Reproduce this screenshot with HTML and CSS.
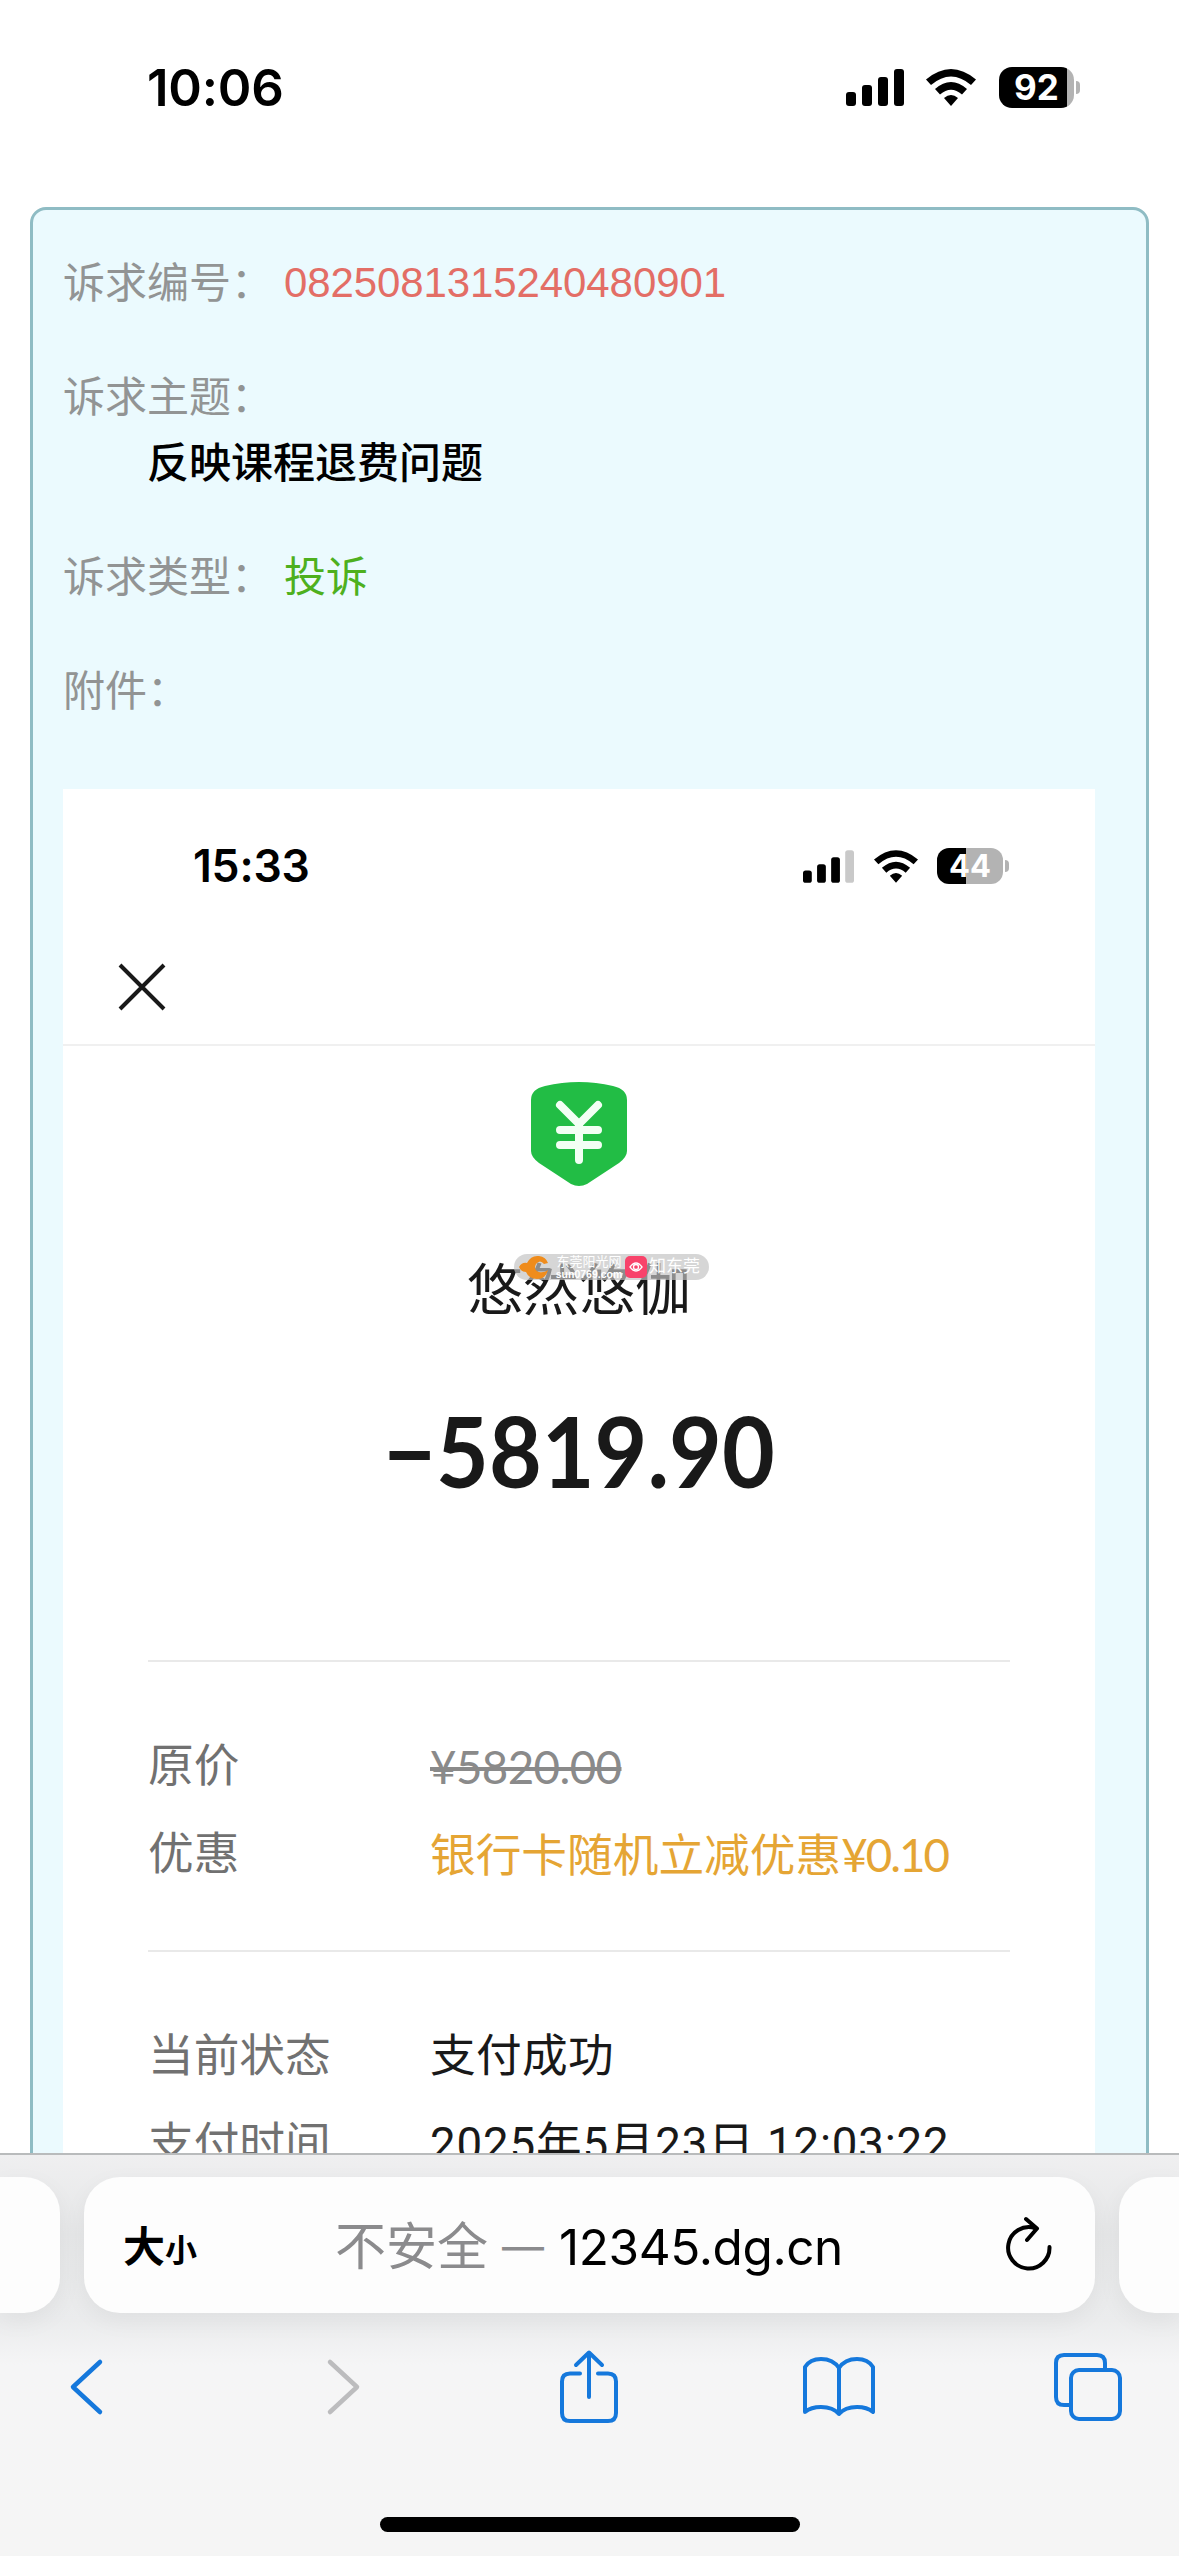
FILE: index.html
```html
<!DOCTYPE html>
<html lang="zh-CN">
<head>
<meta charset="utf-8">
<title>诉求详情</title>
<link rel="stylesheet" href="styles.css">
</head>
<body>
<main class="page">
  <header class="status">
    <span class="clock">10:06</span>
    <div class="indicators">
      <svg class="signal" viewBox="0 0 58 37"><rect y="23" width="10" height="14" rx="3"/><rect x="16" y="16" width="10" height="21" rx="3"/><rect x="32" y="8" width="10" height="29" rx="3"/><rect x="48" width="10" height="37" rx="3"/></svg>
      <svg class="wifi" viewBox="0 0 50 37"><path d="M0 10.5Q25-10.5 50 10.5L45 16Q25-1 5 16ZM9 20Q25 6 41 20L36 25.5Q25 16 14 25.5ZM18 29Q25 23 32 29L25 37Z"/></svg>
      <div class="battery"><span>92</span></div>
    </div>
  </header>

  <section class="card">
    <div class="field"><span class="label">诉求编号：</span><span class="number">0825081315240480901</span></div>
    <div class="field field-block"><span class="label">诉求主题：</span><strong class="subject">反映课程退费问题</strong></div>
    <div class="field"><span class="label">诉求类型：</span><span class="kind">投诉</span></div>
    <div class="field"><span class="label">附件：</span></div>

    <article class="receipt">
      <header class="receipt-top">
        <div class="receipt-status">
          <span class="clock clock-small">15:33</span>
          <div class="indicators indicators-small">
            <svg class="signal" viewBox="0 0 58 37"><rect y="23" width="10" height="14" rx="3"/><rect x="16" y="16" width="10" height="21" rx="3"/><rect x="32" y="8" width="10" height="29" rx="3"/><rect class="dim" x="48" width="10" height="37" rx="3"/></svg>
            <svg class="wifi" viewBox="0 0 50 37"><path d="M0 10.5Q25-10.5 50 10.5L45 16Q25-1 5 16ZM9 20Q25 6 41 20L36 25.5Q25 16 14 25.5ZM18 29Q25 23 32 29L25 37Z"/></svg>
            <div class="battery battery-half"><span>44</span></div>
          </div>
        </div>
        <svg class="close" viewBox="0 0 48 48"><path d="M2 2L46 46M46 2L2 46"/></svg>
      </header>

      <svg class="shield" viewBox="0 0 96 104"><path class="shield-body" d="M14 4Q48-4 82 4Q96 7 96 18V69Q96 75 88 81L56 102Q48 106 40 102L8 81Q0 75 0 69V18Q0 7 14 4Z"/><path class="yen" d="M29 23L48 42L67 23M29 48H67M29 63H67M48 42V78"/></svg>

      <div class="merchant">
        <h1 class="merchant-name">悠然悠伽</h1>
        <div class="watermark">
          <svg class="wm-sun" viewBox="0 0 30 24"><path d="M0 12Q3 7 8 8Q12 0 20 1Q27 2 29 8L25 9Q21 4 17 9Q14 15 20 17Q25 18 29 15Q27 24 18 24Q10 24 7 17Q2 17 0 12Z"/></svg>
          <div class="wm-site"><span class="wm-cn">东莞阳光网</span><span class="wm-url">sun0769.com</span></div>
          <svg class="wm-app" viewBox="0 0 22 22"><rect width="22" height="22" rx="5"/><path d="M5 11Q11 3 17 11Q11 19 5 11Z"/><circle cx="11" cy="11" r="2.5"/></svg>
          <span class="wm-name">知东莞</span>
        </div>
      </div>

      <div class="amount">−5819.90</div>

      <dl class="details">
        <div class="row"><dt>原价</dt><dd class="original">¥5820.00</dd></div>
        <div class="row"><dt>优惠</dt><dd class="discount">银行卡随机立减优惠<span>¥0.10</span></dd></div>
      </dl>
      <dl class="details">
        <div class="row"><dt>当前状态</dt><dd class="state">支付成功</dd></div>
        <div class="row"><dt>支付时间</dt><dd class="date">2025年5月23日 12:03:22</dd></div>
      </dl>
    </article>
  </section>
</main>

<footer class="browser">
  <div class="tabs">
    <div class="tab tab-prev"></div>
    <div class="tab tab-current">
      <span class="text-size">大<small>小</small></span>
      <span class="address"><span class="insecure">不安全</span><span class="dash">—</span><span class="host">12345.dg.cn</span></span>
      <svg class="reload" viewBox="0 0 46 54"><path d="M29 11A20.700 20.700 0 1 0 43.500 30M20 2L31 11.500L21 23"/></svg>
    </div>
    <div class="tab tab-next"></div>
  </div>
  <nav class="tools">
    <svg class="chevron" viewBox="0 0 34 56"><path d="M31 3L4 28L31 53"/></svg>
    <svg class="chevron chevron-off" viewBox="0 0 34 56"><path d="M3 3L30 28L3 53"/></svg>
    <svg class="share" viewBox="0 0 58 74"><path d="M20 23.500H10Q2 23.500 2 31.500V63Q2 71 10 71H48Q56 71 56 63V31.500Q56 23.500 48 23.500H38M29 47V3M16 15L29 2.500L42 15"/></svg>
    <svg class="book" viewBox="0 0 72 62"><path d="M36 12Q30 3 18 3Q7 3 2 11V56Q8 51 18 51Q30 51 36 58Q42 51 54 51Q64 51 70 56V11Q65 3 54 3Q42 3 36 12V58"/></svg>
    <svg class="windows" viewBox="0 0 68 68"><path d="M16 52H10Q2 52 2 44V10Q2 2 10 2H43Q51 2 51 10V16"/><rect x="17" y="17" width="49" height="49" rx="8"/></svg>
  </nav>
  <div class="home"></div>
</footer>
</body>
</html>
```
FILE: styles.css
```css
* { box-sizing: border-box; }

body {
  margin: 0;
  width: 1179px;
  height: 2556px;
  display: flex;
  flex-direction: column;
  overflow: hidden;
  background: #fff;
  color: #000;
  font-family: "Liberation Sans", "Noto Sans CJK SC", sans-serif;
}

svg { display: block; flex: none; overflow: visible; }

.page { flex: 1; min-height: 0; overflow: hidden; }

/* status bars */
.status {
  height: 207px;
  padding: 67px 98px 0 147px;
  display: flex;
  justify-content: space-between;
  align-items: flex-start;
}
.clock { font: 600 51px/42px Inter, sans-serif; letter-spacing: -0.200px; }
.indicators { display: flex; align-items: center; height: 41px; }
.signal { width: 58px; height: 37px; margin-right: 22px; }
.wifi { width: 50px; height: 37px; margin-right: 23px; }
.dim { fill: #c9c9c9; }
.battery {
  position: relative;
  width: 75px;
  height: 41px;
  margin-right: 7px;
  border-radius: 13px;
  background: linear-gradient(90deg, #000 68px, #b3b3b3 68px);
  color: #fff;
  font: 700 35px/41px Inter, sans-serif;
  text-align: center;
}
.battery::after {
  content: "";
  position: absolute;
  right: -6px;
  top: 14px;
  width: 4px;
  height: 13px;
  border-radius: 0 6px 6px 0;
  background: #b3b3b3;
}

/* complaint card */
.card {
  margin: 0 30px;
  height: 2400px;
  padding: 41px 51px 0 30px;
  border: 3px solid #8fbcc4;
  border-radius: 16px;
  background: #ebfafe;
}
.field {
  display: flex;
  min-height: 66px;
  margin-bottom: 48px;
  font-size: 42px;
  line-height: 66px;
}
.field-block { flex-direction: column; }
.label { width: 221px; color: #929494; white-space: nowrap; }
.number { color: #e36e66; line-height: 64px; letter-spacing: -0.100px; }
.subject { padding-left: 84px; font-weight: 500; }
.kind { color: #4eb01e; }

/* payment receipt */
.receipt {
  margin-top: 64px;
  height: 1700px;
  width: 1032px;
  background: #fff;
}
.receipt-top {
  height: 257px;
  border-bottom: 2px solid #f0f0f0;
}
.receipt-status {
  height: 176px;
  padding: 59px 86px 0 130px;
  display: flex;
  justify-content: space-between;
  align-items: flex-start;
}
.clock-small { font-size: 44.500px; line-height: 36px; }
.indicators-small { height: 36px; }
.indicators-small .signal { width: 51px; height: 33px; margin-right: 20px; }
.indicators-small .wifi { width: 44px; height: 33px; margin-right: 19px; }
.battery-half {
  width: 66px;
  height: 36px;
  margin-right: 6px;
  border-radius: 12px;
  background: linear-gradient(90deg, #000 29px, #b3b3b3 29px);
  font-size: 31px;
  line-height: 36px;
}
.battery-half::after { top: 12px; height: 12px; }
.close { width: 48px; height: 48px; margin-left: 55px; margin-top: -2px; }
.close path { fill: none; stroke: #191919; stroke-width: 4; }

.shield { width: 96px; height: 104px; margin: 36px auto 0; }
.shield-body { fill: #22bd45; }
.yen { fill: none; stroke: #f2fff4; stroke-width: 8; stroke-linecap: round; stroke-linejoin: round; }

.merchant { position: relative; margin-top: 65px; height: 80px; text-align: center; }
.merchant-name { margin: 0; font-size: 56px; line-height: 80px; font-weight: 400; color: #191919; }
.watermark {
  position: absolute;
  left: 451px;
  top: 3px;
  width: 195px;
  height: 26px;
  padding: 0 9px 0 5px;
  display: flex;
  align-items: center;
  border-radius: 13px;
  background: rgba(195, 195, 195, 0.68);
  color: #fff;
}
.wm-sun { width: 30px; height: 24px; fill: #ef8c1c; }
.wm-site { display: flex; flex-direction: column; margin-left: 4px; width: 72px; white-space: nowrap; }
.wm-cn { font-size: 13px; line-height: 14px; }
.wm-url { font-size: 10.500px; line-height: 10px; font-weight: 700; }
.wm-app { width: 22px; height: 22px; }
.wm-app rect { fill: #f8436a; }
.wm-app path, .wm-app circle { fill: none; stroke: #fff; stroke-width: 1.3; }
.wm-name { margin-left: 2px; font-size: 17px; line-height: 24px; white-space: nowrap; }

.amount {
  height: 120px;
  margin: 59px 0 150px;
  font: 700 98px/120px Lato, sans-serif;
  text-align: center;
  color: #191919;
  transform: scaleX(0.93);
}

.details {
  margin: 0 85px;
  padding: 61px 0 51px;
  border-top: 2px solid #e9e9e9;
}
.row { display: flex; height: 88px; align-items: center; font-size: 45.700px; line-height: 88px; }
.row dt { width: 282px; color: #717171; }
.row dd { margin: 0; color: #191919; white-space: nowrap; font-family: Lato, "Noto Sans CJK SC", sans-serif; }
.row .original { color: #8a8a8a; letter-spacing: -0.600px; text-decoration: line-through; text-decoration-thickness: 4px; }
.row .discount { color: #e5a534; }
.discount span { letter-spacing: -2px; }
.row .state { font-family: inherit; letter-spacing: 0.300px; }
.row .date { font-family: Roboto, "Noto Sans CJK SC", sans-serif; letter-spacing: 0.800px; }

/* browser chrome */
.browser {
  flex: none;
  height: 403px;
  border-top: 2px solid #b9bbbc;
  background: linear-gradient(#efeff0 0, #e6e7e8 80px, #ebeced 165px, #f5f5f6 210px, #f5f5f5 100%);
}
.tabs { display: flex; gap: 24px; margin: 22px 0 0; height: 136px; }
.tab { background: #fdfdfd; border-radius: 36px; box-shadow: 0 8px 24px rgba(0, 0, 0, 0.05); }
.tab-prev { width: 60px; border-radius: 0 36px 36px 0; }
.tab-next { width: 60px; border-radius: 36px 0 0 36px; }
.tab-current {
  width: 1011px;
  padding: 4px 43px 0 39px;
  display: flex;
  align-items: center;
}
.text-size { width: 212px; padding-top: 5px; font-size: 42px; font-weight: 700; line-height: 60px; white-space: nowrap; }
.text-size small { font-size: 32px; }
.address { flex: 1; display: flex; font: 400 49.500px/68px Inter, "Noto Sans CJK SC", sans-serif; white-space: nowrap; }
.insecure { color: #8b8b8d; font-size: 51px; }
.dash { margin: 0 15px 0 14px; color: #8b8b8d; font-size: 42px; }
.host { letter-spacing: -0.400px; }
.reload { width: 46px; height: 54px; margin-top: -7px; }
.reload path { fill: none; stroke: #000; stroke-width: 4; stroke-linecap: round; stroke-linejoin: round; }

.tools {
  height: 76px;
  margin-top: 36px;
  padding-left: 69px;
  display: flex;
  align-items: center;
}
.tools svg { fill: none; stroke: #1578dc; stroke-width: 4; stroke-linecap: round; stroke-linejoin: round; }
.chevron { width: 34px; height: 56px; }
.tools .chevron { stroke-width: 4.500; }
.tools .chevron-off { margin-left: 224px; stroke: #bcbcbe; }
.share { width: 58px; height: 74px; margin-left: 199px; }
.book { width: 72px; height: 62px; margin-left: 185px; }
.windows { width: 68px; height: 68px; margin-left: 179px; }
.home { width: 420px; height: 15px; margin: 92px auto 0; border-radius: 8px; background: #000; }
```
